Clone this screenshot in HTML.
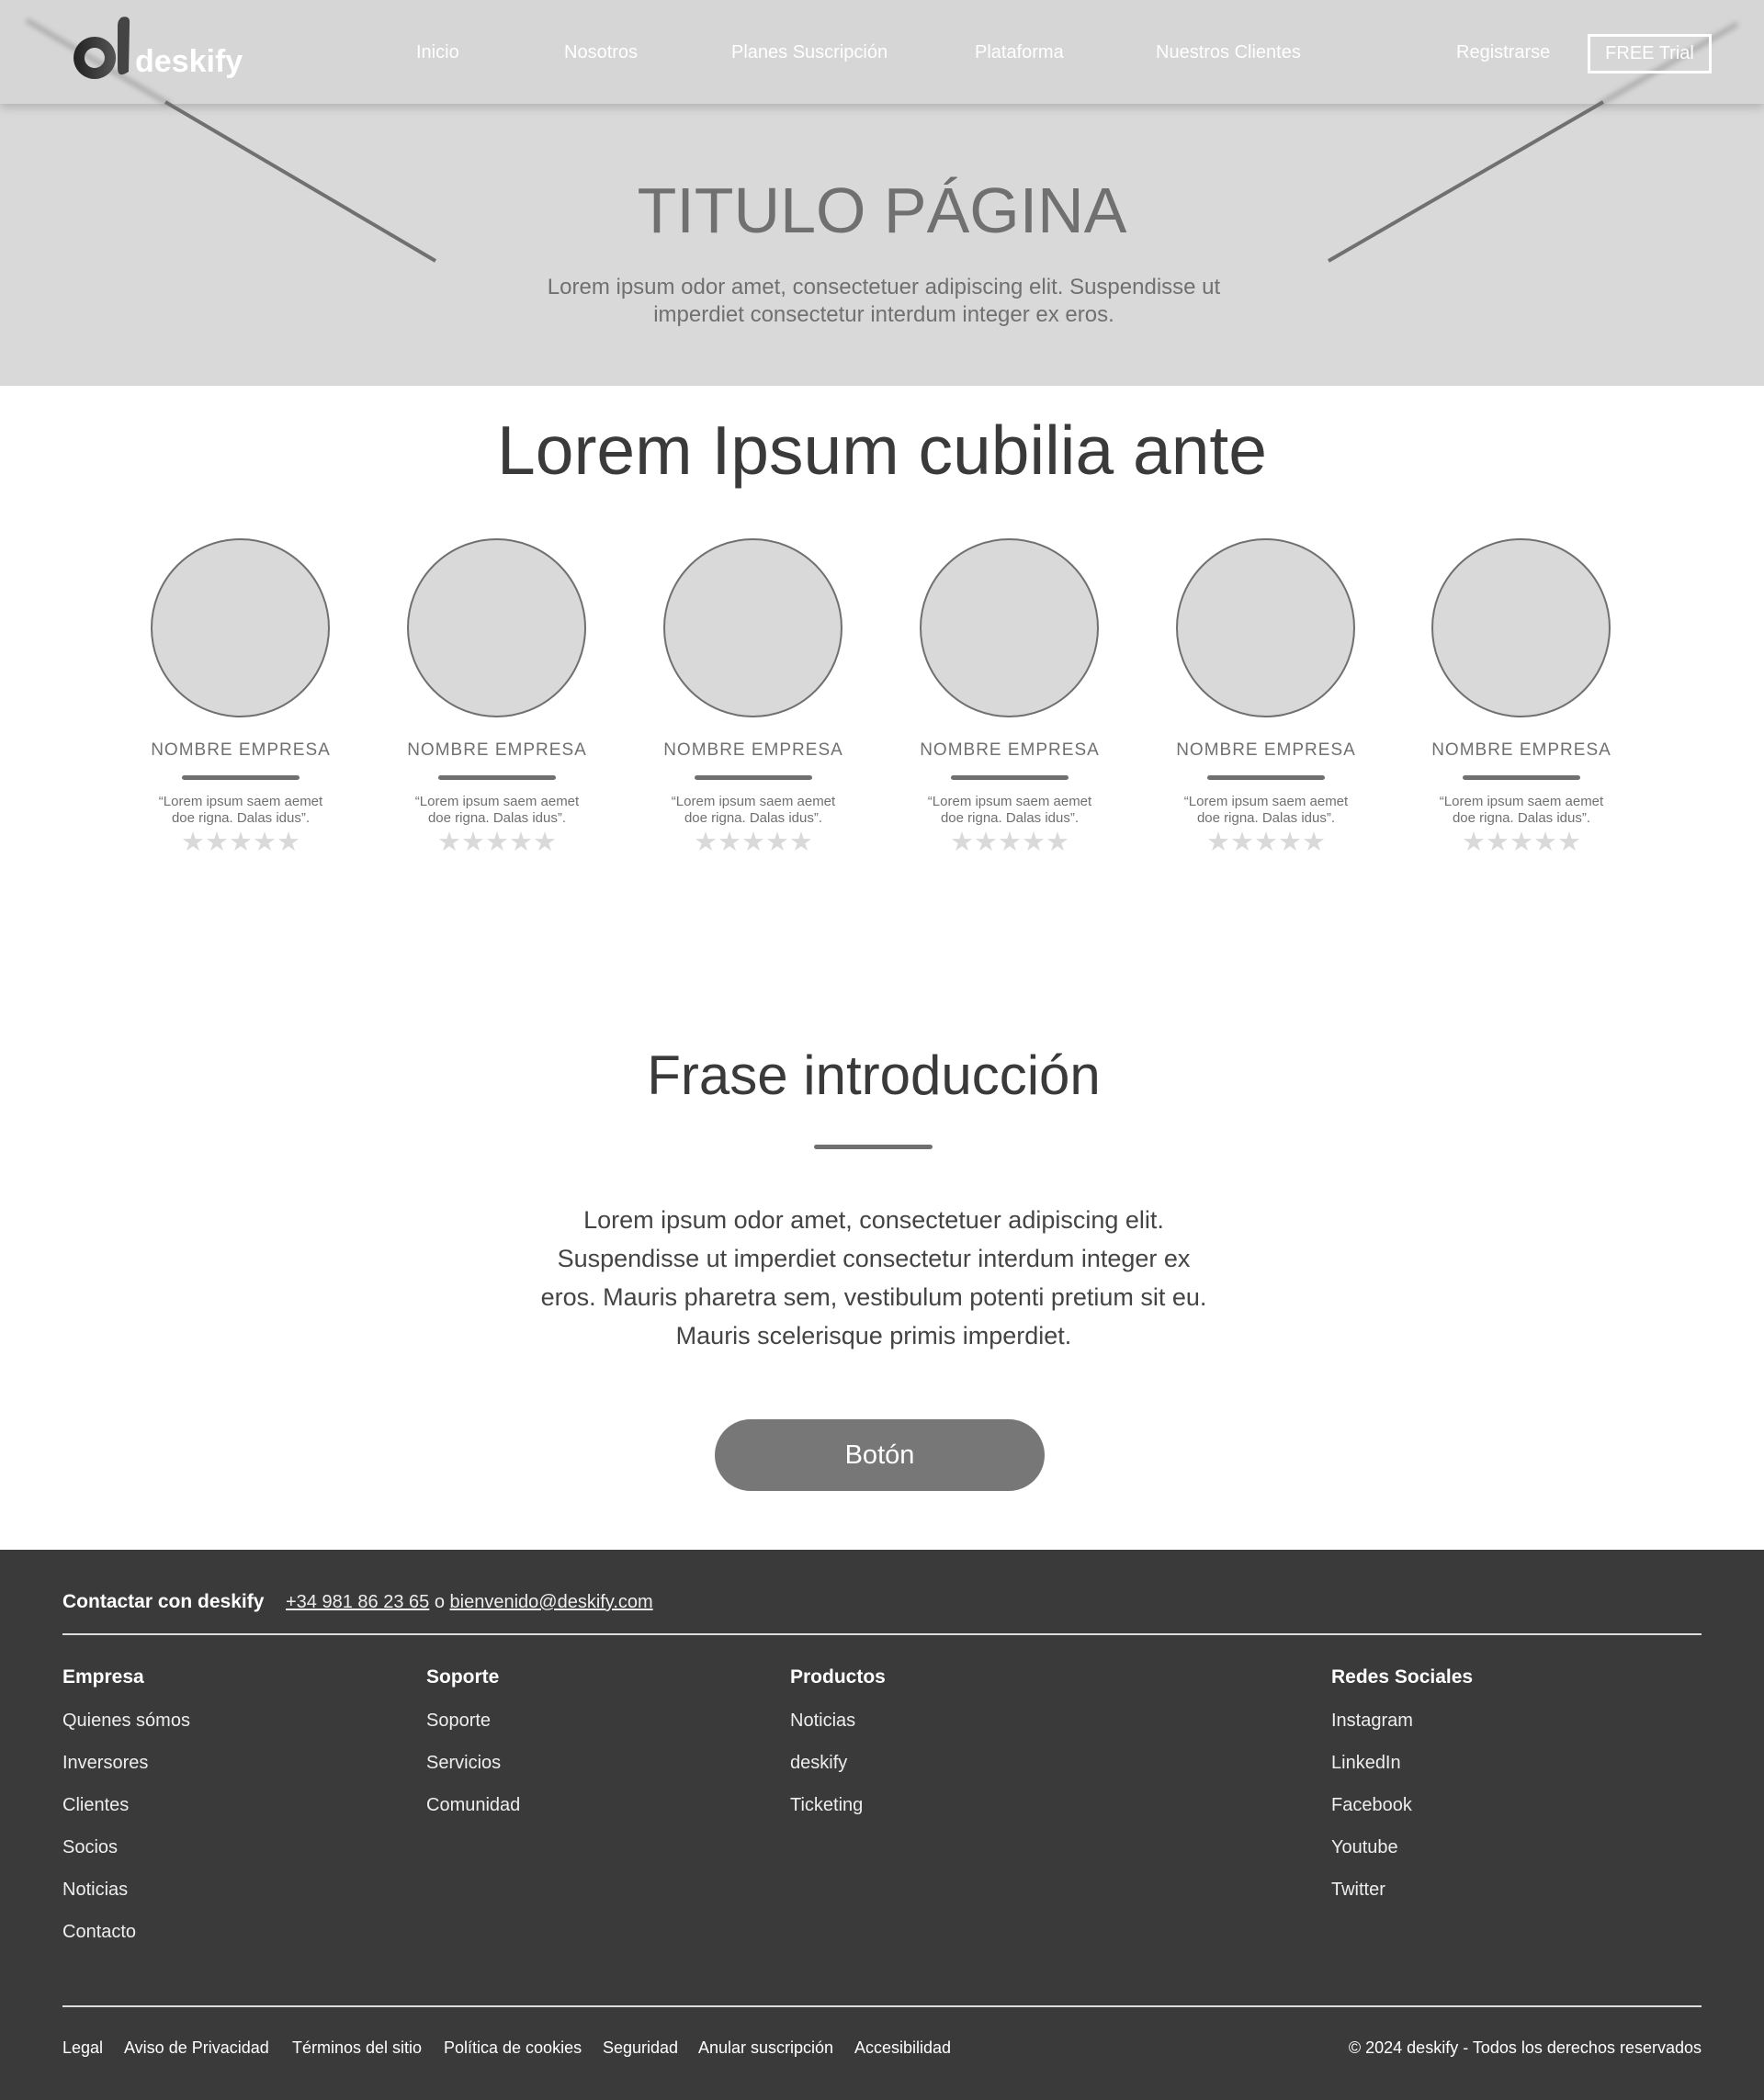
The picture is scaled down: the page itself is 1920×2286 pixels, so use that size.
<!DOCTYPE html>
<html><head><meta charset="utf-8"><style>
*{margin:0;padding:0;box-sizing:border-box}
body{width:1920px;height:2286px;position:relative;background:#fff;font-family:"Liberation Sans",Arial,sans-serif;overflow:hidden}
.a{position:absolute;white-space:nowrap}
.hero{position:absolute;left:0;top:0;width:1920px;height:420px;background:#d9d9d9}
.nav{position:absolute;left:0;top:0;width:1920px;height:113px;background:#d6d6d6;box-shadow:0 4px 10px rgba(0,0,0,.18)}
.nl{position:absolute;top:46px;font-size:20px;color:#fff}
.c{text-align:center;transform:translateX(-50%)}
.circ{position:absolute;top:586px;width:195px;height:195px;border-radius:50%;background:#d9d9d9;border:2px solid #707070}
.nm{position:absolute;top:806px;font-size:19px;letter-spacing:1px;color:#707070;transform:translateX(-50%)}
.bar{position:absolute;top:844px;width:128px;height:5px;border-radius:3px;background:#707070;transform:translateX(-50%)}
.q{position:absolute;top:864px;font-size:15px;line-height:18px;color:#707070;text-align:center;transform:translateX(-50%)}
.st{position:absolute;top:899px;font-size:29px;letter-spacing:0px;color:#d9d9d9;transform:translateX(-50%)}
.foot{position:absolute;left:0;top:1687px;width:1920px;height:599px;background:#3a3a3a;color:#fff}
.fh{position:absolute;top:1814px;font-size:21px;font-weight:bold;color:#fff}
.fi{position:absolute;font-size:20px;color:#eee}
.fb{position:absolute;top:2219px;font-size:18px;color:#fff}
</style></head><body>
<div class="hero"></div>
<div class="nav"></div>
<svg class="a" style="left:0;top:0" width="1920" height="420">
<defs><filter id="bl"><feGaussianBlur stdDeviation="3"/></filter></defs>
<line x1="29" y1="22" x2="185" y2="114" stroke="#888" stroke-width="5" filter="url(#bl)" opacity=".6"/>
<line x1="1891" y1="26" x2="1740" y2="114" stroke="#888" stroke-width="5" filter="url(#bl)" opacity=".6"/>
<line x1="180" y1="111" x2="474" y2="284" stroke="#707070" stroke-width="4"/>
<line x1="1745" y1="111" x2="1446" y2="284" stroke="#707070" stroke-width="4"/>
</svg>
<svg class="a" style="left:78px;top:14px" width="70" height="80">
<defs><linearGradient id="g" x1="0" x2="1"><stop offset="0" stop-color="#222"/><stop offset="1" stop-color="#555"/></linearGradient></defs>
<path d="M25 26 a23 23 0 1 0 0.1 0 Z M25 38 a11 11 0 1 1 -0.1 0 Z" fill="url(#g)" fill-rule="evenodd"/>
<path d="M54 5 Q64 2 63 12 L62 64 Q50 72 50 60 L50 14 Q50 8 54 5 Z" fill="#444"/>
</svg>
<div class="a" style="left:147px;top:48px;font-size:34px;font-weight:bold;color:#fff">deskify</div>
<div class="nl" style="left:453px">Inicio</div>
<div class="nl" style="left:614px">Nosotros</div>
<div class="nl" style="left:796px">Planes Suscripción</div>
<div class="nl" style="left:1061px">Plataforma</div>
<div class="nl" style="left:1258px">Nuestros Clientes</div>
<div class="nl" style="left:1585px">Registrarse</div>
<div class="a" style="left:1728px;top:37px;width:135px;height:43px;border:3px solid #fff;color:#fff;font-size:20px;text-align:center;line-height:37px">FREE Trial</div>
<div class="a c" style="left:960px;top:189px;font-size:70px;color:#707070">TITULO PÁGINA</div>
<div class="a c" style="left:962px;top:298px;font-size:24px;line-height:30px;color:#707070;white-space:normal;width:800px">Lorem ipsum odor amet, consectetuer adipiscing elit. Suspendisse ut imperdiet consectetur interdum integer ex eros.</div>

<div class="a c" style="left:960px;top:447px;font-size:75px;color:#3a3a3a;font-weight:300">Lorem Ipsum cubilia ante</div>

<div class="circ" style="left:164px"></div><div class="circ" style="left:443px"></div><div class="circ" style="left:722px"></div><div class="circ" style="left:1001px"></div><div class="circ" style="left:1280px"></div><div class="circ" style="left:1558px"></div>
<div class="nm a" style="left:262px">NOMBRE EMPRESA</div><div class="nm a" style="left:541px">NOMBRE EMPRESA</div><div class="nm a" style="left:820px">NOMBRE EMPRESA</div><div class="nm a" style="left:1099px">NOMBRE EMPRESA</div><div class="nm a" style="left:1378px">NOMBRE EMPRESA</div><div class="nm a" style="left:1656px">NOMBRE EMPRESA</div>
<div class="bar" style="left:262px"></div><div class="bar" style="left:541px"></div><div class="bar" style="left:820px"></div><div class="bar" style="left:1099px"></div><div class="bar" style="left:1378px"></div><div class="bar" style="left:1656px"></div>
<div class="q a" style="left:262px">“Lorem ipsum saem aemet<br>doe rigna. Dalas idus”.</div><div class="q a" style="left:541px">“Lorem ipsum saem aemet<br>doe rigna. Dalas idus”.</div><div class="q a" style="left:820px">“Lorem ipsum saem aemet<br>doe rigna. Dalas idus”.</div><div class="q a" style="left:1099px">“Lorem ipsum saem aemet<br>doe rigna. Dalas idus”.</div><div class="q a" style="left:1378px">“Lorem ipsum saem aemet<br>doe rigna. Dalas idus”.</div><div class="q a" style="left:1656px">“Lorem ipsum saem aemet<br>doe rigna. Dalas idus”.</div>
<div class="st a" style="left:262px">★★★★★</div><div class="st a" style="left:541px">★★★★★</div><div class="st a" style="left:820px">★★★★★</div><div class="st a" style="left:1099px">★★★★★</div><div class="st a" style="left:1378px">★★★★★</div><div class="st a" style="left:1656px">★★★★★</div>

<div class="a c" style="left:951px;top:1136px;font-size:60px;color:#3a3a3a;font-weight:300">Frase introducción</div>
<div class="a" style="left:886px;top:1246px;width:129px;height:5px;border-radius:3px;background:#707070"></div>
<div class="a c" style="left:951px;top:1307px;font-size:27px;line-height:42px;color:#444">Lorem ipsum odor amet, consectetuer adipiscing elit.<br>Suspendisse ut imperdiet consectetur interdum integer ex<br>eros. Mauris pharetra sem, vestibulum potenti pretium sit eu.<br>Mauris scelerisque primis imperdiet.</div>
<div class="a" style="left:778px;top:1545px;width:359px;height:78px;border-radius:39px;background:#777;color:#fff;font-size:29px;text-align:center;line-height:78px">Botón</div>

<div class="foot"></div>
<div class="a" style="left:68px;top:1732px;font-size:21px;font-weight:bold;color:#fff">Contactar con deskify</div>
<div class="a" style="left:311px;top:1733px;font-size:20px;color:#eee"><u>+34 981 86 23 65</u> o <u>bienvenido@deskify.com</u></div>
<div class="a" style="left:68px;top:1778px;width:1784px;height:2px;background:#ddd"></div>
<div class="fh" style="left:68px">Empresa</div><div class="fh" style="left:464px">Soporte</div><div class="fh" style="left:860px">Productos</div><div class="fh" style="left:1449px">Redes Sociales</div>
<div class="fi" style="left:68px;top:1862px">Quienes sómos</div><div class="fi" style="left:68px;top:1908px">Inversores</div><div class="fi" style="left:68px;top:1954px">Clientes</div><div class="fi" style="left:68px;top:2000px">Socios</div><div class="fi" style="left:68px;top:2046px">Noticias</div><div class="fi" style="left:68px;top:2092px">Contacto</div>
<div class="fi" style="left:464px;top:1862px">Soporte</div><div class="fi" style="left:464px;top:1908px">Servicios</div><div class="fi" style="left:464px;top:1954px">Comunidad</div>
<div class="fi" style="left:860px;top:1862px">Noticias</div><div class="fi" style="left:860px;top:1908px">deskify</div><div class="fi" style="left:860px;top:1954px">Ticketing</div>
<div class="fi" style="left:1449px;top:1862px">Instagram</div><div class="fi" style="left:1449px;top:1908px">LinkedIn</div><div class="fi" style="left:1449px;top:1954px">Facebook</div><div class="fi" style="left:1449px;top:2000px">Youtube</div><div class="fi" style="left:1449px;top:2046px">Twitter</div>
<div class="a" style="left:68px;top:2183px;width:1784px;height:2px;background:#ddd"></div>
<div class="fb" style="left:68px">Legal</div><div class="fb" style="left:135px">Aviso de Privacidad</div><div class="fb" style="left:318px">Términos del sitio</div><div class="fb" style="left:483px">Política de cookies</div><div class="fb" style="left:656px">Seguridad</div><div class="fb" style="left:760px">Anular suscripción</div><div class="fb" style="left:930px">Accesibilidad</div>
<div class="fb" style="right:68px">© 2024 deskify - Todos los derechos reservados</div>
</body></html>
